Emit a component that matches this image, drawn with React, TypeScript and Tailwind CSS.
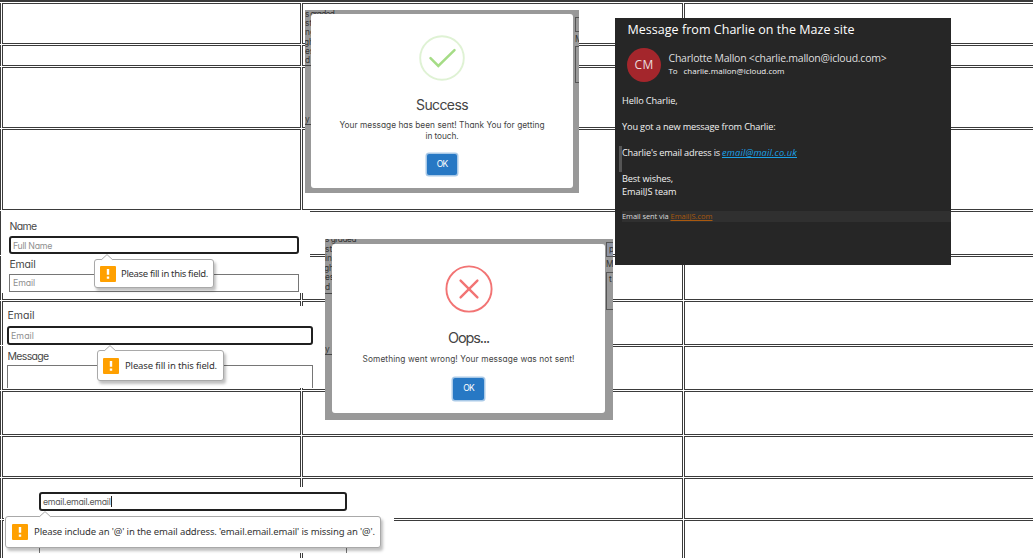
import { useLayoutEffect, useRef, useState } from "react";
import type { ReactNode } from "react";

const hand = "font-['Inter',sans-serif] [font-feature-settings:'cv11','ss03'] font-normal";
const segoe = "font-['Open_Sans','Noto_Sans',sans-serif]";

/** Single line of text whose tracking is adjusted so that it fills `w` pixels. */
function Fit({ w, children, className = "" }: { w: number; children: string; className?: string }) {
  const ref = useRef<HTMLSpanElement>(null);
  const [spacing, setSpacing] = useState(0);
  useLayoutEffect(() => {
    if (ref.current) {
      setSpacing((w - ref.current.getBoundingClientRect().width) / children.length);
    }
  }, []);
  return (
    <span ref={ref} className={`inline-block whitespace-pre ${className}`} style={{ letterSpacing: `${spacing}px` }}>
      {children}
    </span>
  );
}

function TableGrid() {
  const cell = "border border-[#3b3b3b]";
  return (
    <div className="w-[1100px] border-t-2 border-[#3b3b3b] pt-px">
      <div className="grid grid-cols-[1px_299px_381px_420px] grid-rows-[41px_21px_61px_81px_44px_44px_44px_44px_44px_41px_41px_50px] gap-px">
        {Array.from({ length: 48 }, (_, i) => (
          <div key={i} className={i % 4 === 0 ? "bg-[#3b3b3b]" : cell} />
        ))}
      </div>
    </div>
  );
}

function Bubble({ text, w, className, arrow, gap }: { text: string; w: number; className: string; arrow: string; gap: string }) {
  return (
    <div className={`absolute flex items-center rounded-[3px] border border-[#a9a9a9] bg-white shadow-[2px_3px_3px_rgba(0,0,0,0.25)] ${gap} ${className}`}>
      <svg className={`absolute -top-[6px] ${arrow}`} width="12" height="7" viewBox="0 0 12 7">
        <path d="M0 6.2 L6 0.6 L12 6.2 V7 H0 Z" fill="#fff" />
        <path d="M0.3 5.8 L6 0.6 L11.7 5.8" fill="none" stroke="#a9a9a9" />
      </svg>
      <svg className="shrink-0" width="16" height="16" viewBox="0 0 16 16">
        <rect width="16" height="16" rx="1" fill="#ffa000" />
        <path d="M6.8 3h2.4v5.8H6.8z M6.8 10.6h2.4v2.2H6.8z" fill="#fff" />
      </svg>
      <div className="font-['Noto_Sans',sans-serif] text-[9.5px] leading-4 text-[#333]">
        <Fit w={w}>{text}</Fit>
      </div>
    </div>
  );
}

function Backdrop({ className, children }: { className: string; children: ReactNode }) {
  return <div className={`absolute overflow-hidden bg-[#999] text-[8.3px] text-[#333] ${hand} ${className}`}>{children}</div>;
}

function OkButton({ className }: { className: string }) {
  return (
    <button className={`flex items-center justify-center rounded-[2px] bg-[#2778c4] text-[8.5px] text-white shadow-[0_0_0_1.5px_#a9c9e7] ${className}`}>
      <Fit w={10.5}>OK</Fit>
    </button>
  );
}

function SuccessDialog() {
  return (
    <Backdrop className="left-[305px] top-[10px] h-[183px] w-[274px]">
      <div className="flex justify-between">
        <div className="flex w-[60px] flex-col items-start whitespace-nowrap leading-[9.2px]">
          <Fit w={29}>s graded</Fit>
          <span>sti</span>
          <span className="-ml-[2px]">ing</span>
          <span className="-ml-px">ght</span>
          <span>es</span>
          <span className="w-full border-b border-[#444]">d</span>
          <span className="mt-[49px] w-full border-b border-[#444]">y s</span>
        </div>
        <div className="mr-px flex w-[3px] flex-col">
          <span className="-mt-[7px] h-[11px] leading-[9px]">E</span>
          <span className="mt-[3px] h-[15px] w-2 border border-[#555]" />
          <span className="h-[14px] leading-[14px]">M</span>
          <span className="h-[37px] w-2 border border-[#555]" />
        </div>
      </div>
      <div className="absolute left-[6px] top-[4px] flex h-[174px] w-[262px] flex-col items-center rounded-[3px] bg-white">
        <svg className="mt-[21px] h-[46px] w-[46px] shrink-0" viewBox="0 0 46 46" fill="none">
          <circle cx="23" cy="23" r="21.8" stroke="#dff2d4" strokeWidth="1.9" />
          <path d="M11.5 23.2 L19.3 31 L35.5 15.2" stroke="#a5dc86" strokeWidth="2.5" strokeLinecap="round" />
        </svg>
        <div className="mt-[14px] text-[14px] leading-[20px] text-[#444]"><Fit w={52}>Success</Fit></div>
        <div className="mt-[5px] flex flex-col items-center text-[8.3px] leading-[10.8px] text-[#444]">
          <Fit w={205}>Your message has been sent! Thank You for getting</Fit>
          <Fit w={33}>in touch.</Fit>
        </div>
        <OkButton className="mt-[12.5px] h-[21px] w-[30px]" />
      </div>
    </Backdrop>
  );
}

function ErrorDialog() {
  return (
    <Backdrop className="left-[325px] top-[239px] h-[181px] w-[288px]">
      <div className="flex justify-between">
        <div className="-mt-[4px] flex w-[60px] flex-col items-start whitespace-nowrap leading-[9.6px]">
          <Fit w={31}>s graded</Fit>
          <span>sti</span>
          <span>ing</span>
          <span className="-ml-px">ght</span>
          <span>es</span>
          <span className="w-full border-b border-[#444]">d</span>
          <span className="mt-[51px] w-full border-b border-[#444]">y s</span>
        </div>
        <div className="flex w-[7px] flex-col">
          <span className="mt-[3px] h-[15px] w-3 border border-[#555] bg-[#8f96a5] pl-[2px] leading-[13px]">p</span>
          <span className="h-[15px] leading-[15px]">M</span>
          <span className="h-[38px] w-3 border border-[#555] pl-[2px] leading-[12px]">t</span>
        </div>
      </div>
      <div className="absolute left-[7px] top-[5px] flex h-[169px] w-[273px] flex-col items-center rounded-[3px] bg-white">
        <svg className="mt-[21px] h-[48px] w-[48px] shrink-0" viewBox="0 0 48 48" fill="none" stroke="#f27474">
          <circle cx="24" cy="24" r="22.6" strokeWidth="1.9" />
          <path d="M15.6 15.6 L32.4 32.4 M32.4 15.6 L15.6 32.4" strokeWidth="2.4" strokeLinecap="round" />
        </svg>
        <div className="mt-[14.5px] text-[14.5px] leading-[20px] text-[#444]"><Fit w={41}>Oops...</Fit></div>
        <div className="mt-[6px] text-[8.3px] leading-[11px] text-[#444]">
          <Fit w={212}>Something went wrong! Your message was not sent!</Fit>
        </div>
        <OkButton className="mt-[13px] h-[22px] w-[31px]" />
      </div>
    </Backdrop>
  );
}

function EmailMessage() {
  return (
    <div className={`absolute left-[615px] top-[18px] h-[247px] w-[336px] bg-[#262626] text-[#f2f2f2] ${segoe}`}>
      <div className="pl-[12.5px] pt-[3px] text-[12.5px] leading-[18px] text-white"><Fit w={227}>Message from Charlie on the Maze site</Fit></div>
      <div className="mt-[9px] flex pl-[12px]">
        <div className="flex h-[34px] w-[34px] items-center justify-center rounded-full bg-[#a4262c] text-[12px] text-[#eadcdc]"><Fit w={19}>CM</Fit></div>
        <div className="ml-[7.5px] flex flex-col">
          <div className="mt-[3px] text-[10.5px] leading-[14px] text-[#dedede]"><Fit w={218}>Charlotte Mallon &lt;charlie.mallon@icloud.com&gt;</Fit></div>
          <div className="flex gap-[6px] text-[8px] leading-[12px]">
            <Fit w={9}>To</Fit>
            <Fit w={101}>charlie.mallon@icloud.com</Fit>
          </div>
        </div>
      </div>
      <div className="mt-[12px] flex flex-col pl-[4px] text-[9.2px] font-medium leading-[13px]">
        <div className="flex h-[26px] pl-[3px]"><Fit w={55.5}>Hello Charlie,</Fit></div>
        <div className="flex h-[26px] pl-[3px]"><Fit w={153.5}>You got a new message from Charlie:</Fit></div>
        <div className="flex h-[26px] gap-[2px] border-l-[3px] border-[#555]">
          <Fit w={98}>Charlie's email adress is</Fit>
          <Fit w={75} className="italic text-[#1ba1e8] underline underline-offset-1">email@mail.co.uk</Fit>
        </div>
        <div className="flex h-[13px] pl-[3px]"><Fit w={51}>Best wishes,</Fit></div>
        <div className="flex h-[13px] pl-[3px]"><Fit w={54.5}>EmailJS team</Fit></div>
      </div>
      <div className="ml-[7px] mt-[13px] flex h-[11px] gap-[2px] bg-[#303030] text-[7.5px] leading-[11px] text-[#dadada]">
        <Fit w={46.5}>Email sent via</Fit>
        <Fit w={42} className="text-[#a9590f] underline underline-offset-1">EmailJS.com</Fit>
      </div>
    </div>
  );
}

function Forms() {
  const label = "pl-[0.5px] text-[10.5px] leading-[14px] text-[#484848]";
  const focus = "flex items-center rounded-[3px] border-2 border-[#202020] bg-white text-[8.8px] leading-[13px] text-[#909090]";
  return (
    <>
      <div className={`absolute left-px top-[211px] h-[82px] w-[309px] bg-white pl-[8px] pt-[9px] ${hand}`}>
        <div className={label}><Fit w={27}>Name</Fit></div>
        <div className={`mt-[2px] h-[18px] w-[290px] pl-[2px] ${focus}`}><Fit w={39}>Full Name</Fit></div>
        <div className={`mt-[4px] ${label}`}><Fit w={26}>Email</Fit></div>
        <div className="mt-[2px] flex h-[18px] w-[290px] items-center border border-[#767676] pl-[3px] text-[8.8px] text-[#909090]"><Fit w={22}>Email</Fit></div>
        <Bubble className="left-[93px] top-[48px] h-[29px] w-[120px] pl-[5px]" gap="gap-[5px]" arrow="left-[6px]" text="Please fill in this field." w={87} />
      </div>
      <div className={`absolute left-[3px] top-[306px] h-[82px] w-[322px] bg-white pl-[4px] pt-[3px] ${hand}`}>
        <div className={label}><Fit w={27}>Email</Fit></div>
        <div className={`mt-[3px] h-[19px] w-[306px] pl-[2px] ${focus}`}><Fit w={23}>Email</Fit></div>
        <div className={`mt-[4.5px] ${label}`}><Fit w={41}>Message</Fit></div>
        <div className="mt-[1.5px] h-[23px] w-[306px] border border-b-0 border-[#767676]" />
        <Bubble className="left-[94px] top-[44px] h-[31px] w-[127px] pl-[5px]" gap="gap-[6px]" arrow="left-[6px]" text="Please fill in this field." w={92} />
      </div>
      <div className={`absolute left-[4px] top-[487px] h-[66px] w-[390px] bg-white pl-[35px] pt-[5px] ${hand}`}>
        <div className={`h-[19px] w-[308px] pl-[2px] ${focus}`}>
          <Fit w={67.5} className="text-[#5a5a5a]">email.email.email</Fit>
          <span className="h-[11px] w-px bg-[#202020]" />
        </div>
        <div className="h-[42px] w-[308px] border-x border-[#767676] bg-white" />
        <div className="absolute left-[35px] top-[24px] h-[8px] w-[308px] bg-white" />
        <Bubble className="left-[1px] top-[29px] h-[32px] w-[376px] pl-[6px]" gap="gap-[6px]" arrow="left-[33px]" text="Please include an '@' in the email address. 'email.email.email' is missing an '@'." w={341} />
      </div>
    </>
  );
}

export default function App() {
  return (
    <main className="relative h-[558px] w-[1033px] overflow-hidden bg-white">
      <TableGrid />
      <Forms />
      <SuccessDialog />
      <ErrorDialog />
      <EmailMessage />
    </main>
  );
}
